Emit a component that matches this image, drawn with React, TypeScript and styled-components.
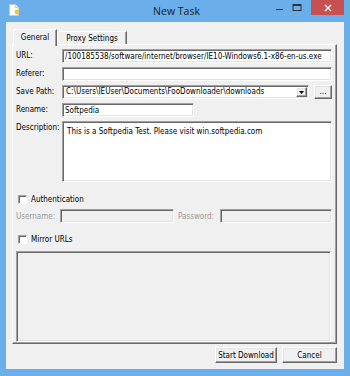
import React from 'react'
import styled, { createGlobalStyle, css } from 'styled-components'

/**
 * ------------------------ GLOBAL ------------------------------
 */
const GlobalStyle = createGlobalStyle`
  html, body {
    margin: 0;
    padding: 0;
    background: #6aaeea;
  }
  * {
    box-sizing: border-box;
  }
`

/**
 * ------------------------- STYLES -------------------------------
 */
const sunken = css`
  border: 1px solid;
  border-color: #a0a0a0 #ffffff #ffffff #a0a0a0;
  box-shadow: inset 1px 1px 0 #696969, inset -1px -1px 0 #e3e3e3;
`
const raised = css`
  border: 1px solid;
  border-color: #ffffff #696969 #696969 #ffffff;
  box-shadow: inset -1px -1px 0 #a0a0a0, inset 1px 1px 0 #e3e3e3;
`

// Window frame
const Window = styled.div`
  width: 350px;
  height: 376px;
  background: #6aaeea;
  display: flex;
  flex-direction: column;
  font-family: 'DejaVu Sans Condensed', 'Liberation Sans', Arial, sans-serif;
  font-stretch: condensed;
  font-size: 8px;
  color: #000;
`
const TitleBar = styled.header`
  height: 22px;
  display: grid;
  grid-template-columns: 1fr auto 1fr;
  padding: 0 6px 0 9px;
`
const AppIcon = styled.div`
  align-self: center;
  display: flex;
  margin-top: -2px;
`
const Title = styled.h1`
  margin: 0;
  font-family: 'Open Sans', 'Liberation Sans', sans-serif;
  font-stretch: normal;
  font-weight: normal;
  font-size: 10.5px;
  line-height: 22px;
  color: #1b1b1b;
`
const Controls = styled.div`
  justify-self: end;
  display: flex;
  align-items: flex-start;
`
const CtrlButton = styled.div<{ close?: boolean }>`
  width: ${p => (p.close ? 33 : 17)}px;
  height: 15px;
  display: flex;
  align-items: center;
  justify-content: center;
  ${p => p.close && `background: #c75050; margin-left: 6px;`}
`

// Client area
const Client = styled.main`
  flex: 1;
  margin: 0 6px 7px 6px;
  background: #f0f0f0;
  padding: 7px 7px 0 6px;
  display: flex;
  flex-direction: column;
`

// Tabs
const TabStrip = styled.nav`
  height: 15px;
  display: flex;
  align-items: flex-end;
  padding-left: 1px;
  position: relative;
  z-index: 1;
`
const Tab = styled.div<{ active?: boolean }>`
  background: #f0f0f0;
  border-top: 1px solid #ffffff;
  border-left: 1px solid #ffffff;
  border-right: 1px solid #696969;
  box-shadow: inset -1px 0 0 #a0a0a0;
  display: flex;
  align-items: center;
  justify-content: center;
  white-space: nowrap;
  ${p =>
    p.active
      ? `
    width: 44px;
    height: 17px;
    margin-bottom: -2px;
    padding-bottom: 2px;
  `
      : `
    width: 70px;
    height: 13px;
  `}
`

const Panel = styled.section`
  height: 300px;
  border: 1px solid;
  border-color: #ffffff #696969 #696969 #ffffff;
  box-shadow: inset -1px -1px 0 #a0a0a0;
  padding: 4px 4px 0 3px;
  display: flex;
  flex-direction: column;
`

const FieldRow = styled.div<{ tall?: boolean }>`
  display: flex;
  align-items: ${p => (p.tall ? 'flex-start' : 'center')};
  margin-bottom: 4px;
`
const Label = styled.label<{ width?: number; disabled?: boolean }>`
  width: ${p => p.width ?? 46}px;
  flex-shrink: 0;
  white-space: nowrap;
  color: ${p => (p.disabled ? '#9a9a9a' : '#000')};
  ${p => p.disabled || `line-height: 14px;`}
`
const TextBox = styled.div<{ width?: number; height?: number; disabled?: boolean }>`
  ${sunken}
  width: ${p => (p.width ? `${p.width}px` : 'auto')};
  flex: ${p => (p.width ? '0 0 auto' : '1')};
  height: ${p => p.height ?? 14}px;
  background: ${p => (p.disabled ? '#f0f0f0' : '#ffffff')};
  padding: 1px 2px;
  line-height: 11px;
  white-space: nowrap;
  overflow: hidden;
`
const DescText = styled.div`
  padding: 3px 2px;
`

const Combo = styled.div`
  ${sunken}
  flex: 1;
  height: 14px;
  background: #fff;
  display: flex;
  align-items: stretch;
  padding: 1px;
`
const ComboText = styled.span`
  flex: 1;
  padding-left: 2px;
  line-height: 10px;
  white-space: nowrap;
  overflow: hidden;
`
const ComboArrow = styled.span`
  ${raised}
  width: 11px;
  background: #f0f0f0;
  display: flex;
  align-items: center;
  justify-content: center;
`
const DotsButton = styled.button`
  ${raised}
  width: 18px;
  height: 14px;
  margin-left: 5px;
  background: #f0f0f0;
  padding: 0;
  font: inherit;
  line-height: 8px;
`

const CheckRow = styled.div`
  display: flex;
  align-items: center;
  height: 11px;
  padding-left: 2px;
  gap: 4px;
  margin-top: 8px;
  margin-bottom: 4px;
`
const CheckBox = styled.span`
  ${sunken}
  width: 9px;
  height: 9px;
  background: #fff;
  box-shadow: inset 1px 1px 0 #696969;
`

const CredRow = styled.div`
  display: flex;
  align-items: center;
  margin-bottom: 3px;
`

const ListBox = styled.div`
  ${sunken}
  height: 91px;
  background: #f0f0f0;
  margin-top: 2px;
  margin-right: 1px;
`

const ButtonBar = styled.footer`
  display: flex;
  justify-content: flex-end;
  gap: 5px;
  margin-top: 3px;
`
const PushButton = styled.button<{ width: number }>`
  ${raised}
  width: ${p => p.width}px;
  height: 16px;
  background: #f0f0f0;
  font: inherit;
  color: #000;
  padding: 0;
`

/**
 * ----------------------- COMPONENT -------------------------------
 */
const App: React.FC = () => {
  return (
    <>
      <GlobalStyle />
      <Window>
        <TitleBar>
          <AppIcon>
            <svg width="10" height="12" viewBox="0 0 10 12">
              <path d="M0.5 0.5h6l3 3v8h-9z" fill="#fff" stroke="#c9c9c9" />
              <path d="M6.5 0.5v3h3" fill="#eee" stroke="#c9c9c9" />
              <circle cx="8" cy="8" r="2.4" fill="#f2c14b" />
            </svg>
          </AppIcon>
          <Title>New Task</Title>
          <Controls>
            <CtrlButton>
              <svg width="9" height="9" viewBox="0 0 9 9">
                <rect x="1" y="6" width="7" height="1" fill="#333" />
              </svg>
            </CtrlButton>
            <CtrlButton>
              <svg width="10" height="9" viewBox="0 0 10 9">
                <rect x="1" y="1.5" width="8" height="6" fill="none" stroke="#333" />
                <rect x="1" y="1" width="8" height="2" fill="#333" />
              </svg>
            </CtrlButton>
            <CtrlButton close>
              <svg width="8" height="8" viewBox="0 0 8 8">
                <path d="M1 1L7 7M7 1L1 7" stroke="#fff" strokeWidth="1.4" />
              </svg>
            </CtrlButton>
          </Controls>
        </TitleBar>

        <Client>
          <TabStrip>
            <Tab active>General</Tab>
            <Tab>Proxy Settings</Tab>
          </TabStrip>

          <Panel>
            <FieldRow>
              <Label>URL:</Label>
              <TextBox>/100185538/software/internet/browser/IE10-Windows6.1-x86-en-us.exe</TextBox>
            </FieldRow>
            <FieldRow>
              <Label>Referer:</Label>
              <TextBox />
            </FieldRow>
            <FieldRow>
              <Label>Save Path:</Label>
              <Combo>
                <ComboText>C:\Users\IEUser\Documents\FooDownloader\downloads</ComboText>
                <ComboArrow>
                  <svg width="5" height="3" viewBox="0 0 5 3">
                    <path d="M0 0h5L2.5 3z" fill="#000" />
                  </svg>
                </ComboArrow>
              </Combo>
              <DotsButton>...</DotsButton>
            </FieldRow>
            <FieldRow>
              <Label>Rename:</Label>
              <TextBox width={132}>Softpedia</TextBox>
            </FieldRow>
            <FieldRow tall>
              <Label>Description:</Label>
              <TextBox height={61}>
                <DescText>This is a Softpedia Test. Please visit win.softpedia.com</DescText>
              </TextBox>
            </FieldRow>

            <CheckRow>
              <CheckBox />
              <span>Authentication</span>
            </CheckRow>
            <CredRow>
              <Label width={44} disabled>
                Username:
              </Label>
              <TextBox width={114} disabled />
              <Label width={42} disabled style={{ marginLeft: 4 }}>
                Password:
              </Label>
              <TextBox disabled />
            </CredRow>

            <CheckRow>
              <CheckBox />
              <span>Mirror URLs</span>
            </CheckRow>
            <ListBox />
          </Panel>

          <ButtonBar>
            <PushButton width={62}>Start Download</PushButton>
            <PushButton width={55}>Cancel</PushButton>
          </ButtonBar>
        </Client>
      </Window>
    </>
  )
}

export default App
